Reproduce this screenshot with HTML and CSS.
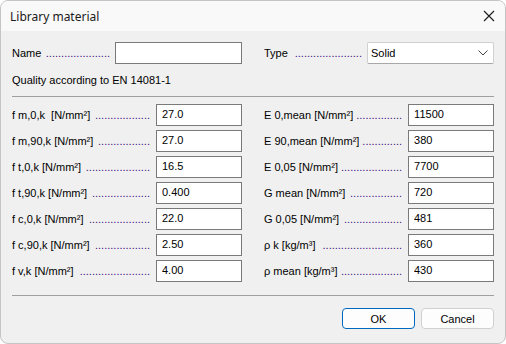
FILE: index.html
```html
<!DOCTYPE html>
<html lang="en">
<head>
    <meta charset="UTF-8">
    <meta name="viewport" content="width=device-width, initial-scale=1.0">
    <title>Library material</title>
    <link rel="stylesheet" href="styles.css">
</head>
<body>
    <div class="window">
        <div class="titlebar">
            <span class="title">Library material</span>
            <svg class="close" width="12" height="12" viewBox="0 0 12 12">
                <path d="M1 1 L11 11 M11 1 L1 11" stroke="#1a1a1a" stroke-width="1.1" fill="none"/>
            </svg>
        </div>
        <div class="content">
            <div class="top-row">
                <div class="field name-field">
                    <div class="leader"><span>Name</span><span class="dots">.....................</span></div>
                    <input type="text" class="box wide">
                </div>
                <div class="field name-field">
                    <div class="leader"><span>Type</span><span class="dots">......................</span></div>
                    <div class="select">
                        <span>Solid</span>
                        <svg width="10" height="6" viewBox="0 0 10 6"><path d="M0.5 0.5 L5 5 L9.5 0.5" stroke="#444" stroke-width="1" fill="none"/></svg>
                    </div>
                </div>
            </div>
            <div class="quality">Quality according to EN 14081-1</div>
            <hr class="sep">
            <div class="values">
                <div class="field"><div class="leader"><span>f m,0,k&nbsp; [N/mm²]</span><span class="dots">..................</span></div><input type="text" class="box" value="27.0"></div>
                <div class="field"><div class="leader"><span>E 0,mean [N/mm²]</span><span class="dots">...............</span></div><input type="text" class="box" value="11500"></div>
                <div class="field"><div class="leader"><span>f m,90,k [N/mm²]</span><span class="dots">.................</span></div><input type="text" class="box" value="27.0"></div>
                <div class="field"><div class="leader"><span>E 90,mean [N/mm²]</span><span class="dots">.............</span></div><input type="text" class="box" value="380"></div>
                <div class="field"><div class="leader"><span>f t,0,k [N/mm²]</span><span class="dots">.....................</span></div><input type="text" class="box" value="16.5"></div>
                <div class="field"><div class="leader"><span>E 0,05 [N/mm²]</span><span class="dots">....................</span></div><input type="text" class="box" value="7700"></div>
                <div class="field"><div class="leader"><span>f t,90,k [N/mm²]</span><span class="dots">...................</span></div><input type="text" class="box" value="0.400"></div>
                <div class="field"><div class="leader"><span>G mean [N/mm²]</span><span class="dots">.................</span></div><input type="text" class="box" value="720"></div>
                <div class="field"><div class="leader"><span>f c,0,k [N/mm²]</span><span class="dots">....................</span></div><input type="text" class="box" value="22.0"></div>
                <div class="field"><div class="leader"><span>G 0,05 [N/mm²]</span><span class="dots">...................</span></div><input type="text" class="box" value="481"></div>
                <div class="field"><div class="leader"><span>f c,90,k [N/mm²]</span><span class="dots">..................</span></div><input type="text" class="box" value="2.50"></div>
                <div class="field"><div class="leader"><span>ρ k [kg/m³]</span><span class="dots">..........................</span></div><input type="text" class="box" value="360"></div>
                <div class="field"><div class="leader"><span>f v,k [N/mm²]</span><span class="dots">.......................</span></div><input type="text" class="box" value="4.00"></div>
                <div class="field"><div class="leader"><span>ρ mean [kg/m³]</span><span class="dots">....................</span></div><input type="text" class="box" value="430"></div>
            </div>
            <hr class="sep bottom">
            <div class="buttons">
                <button class="btn default">OK</button>
                <button class="btn">Cancel</button>
            </div>
        </div>
    </div>
</body>
</html>
```

FILE: styles.css
```css
body{
    margin:0;
    background-color:#ffffff;
    font-family:"Liberation Sans", Arial, sans-serif;
    font-size:11px;
    color:#000;
}
.window{
    width:506px;
    height:344px;
    box-sizing:border-box;
    border:1px solid #c4c4c4;
    border-radius:8px;
    background-color:#f0f0f0;
    overflow:hidden;
}
.titlebar{
    height:30px;
    display:flex;
    align-items:center;
    justify-content:space-between;
    padding:0 10px 0 9px;
    background-color:#f9f9f9;
}
.title{
    font-family:"Noto Sans", sans-serif;
    font-size:12px;
    color:#1a1a1a;
    margin-top:1px;
}
.content{
    padding:11px 11px 0 11px;
}
.top-row{
    display:grid;
    grid-template-columns:230px 230px;
    column-gap:22px;
}
.field{
    display:flex;
    align-items:center;
    height:22px;
}
/* label on the left, dotted leader pushed up to the input */
.leader{
    flex:1;
    display:flex;
    justify-content:space-between;
    white-space:nowrap;
    margin-right:6px;
}
.name-field .leader{
    margin-right:5px;
}
.dots{
    color:#3c0a82;
    padding-left:3px;
}
.box{
    width:86px;
    height:22px;
    box-sizing:border-box;
    border:1px solid #7a7a7a;
    background:#fff;
    padding:0 0 3px 5px;
    margin:0;
    font-family:"Liberation Sans", Arial, sans-serif;
    font-size:11px;
    color:#000;
    outline:none;
}
.box.wide{
    width:127px;
}
.select{
    width:127px;
    height:22px;
    box-sizing:border-box;
    border:1px solid #d0d0d0;
    border-bottom-color:#a8a8a8;
    border-radius:2px;
    background:#fff;
    display:flex;
    align-items:center;
    justify-content:space-between;
    padding:0 5px 0 3px;
}
.quality{
    margin-top:10px;
    height:13px;
    line-height:13px;
}
.sep{
    border:none;
    border-top:1px solid #a0a0a0;
    margin:9px 0 7px 0;
}
.values{
    display:grid;
    grid-template-columns:230px 230px;
    column-gap:22px;
    row-gap:4px;
}
.sep.bottom{
    margin:13px 0 12px 0;
}
.buttons{
    display:flex;
    justify-content:flex-end;
    gap:6px;
}
.btn{
    width:73px;
    height:21px;
    box-sizing:border-box;
    border:1px solid #d0d0d0;
    border-radius:4px;
    background:#fdfdfd;
    font-family:"Liberation Sans", Arial, sans-serif;
    font-size:11px;
    color:#000;
    padding:0;
}
.btn.default{
    border:1px solid #0067c0;
}
```
